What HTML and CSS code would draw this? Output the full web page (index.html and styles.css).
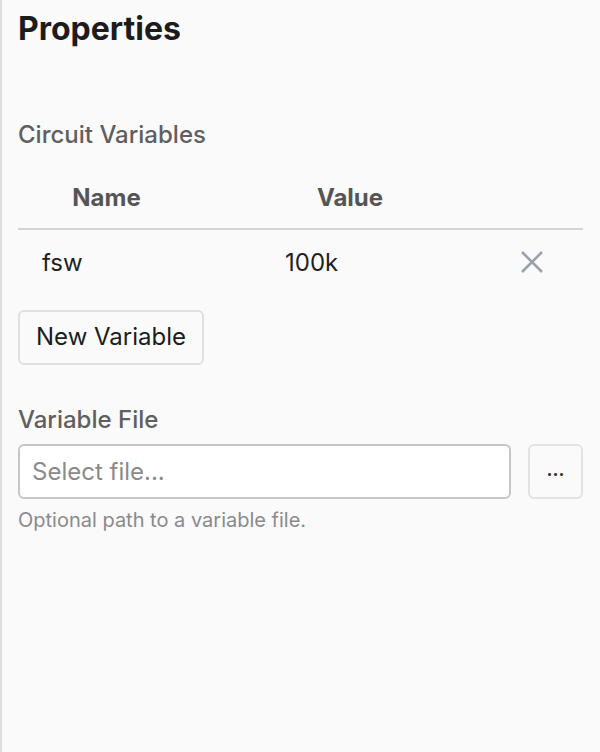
FILE: index.html
```html
<!DOCTYPE html>
<html>
<head>
<meta charset="utf-8">
<link rel="stylesheet" href="styles.css">
</head>
<body>
<div class="panel">
  <h1 class="title">Properties</h1>
  <section class="section">
    <h2 class="section-title">Circuit Variables</h2>
    <div class="vars">
      <div class="vars-head">
        <div class="th th-name">Name</div>
        <div class="th th-value">Value</div>
        <div class="th th-act"></div>
      </div>
      <div class="vars-row">
        <div class="td td-name">fsw</div>
        <div class="td td-value">100k</div>
        <div class="td td-act">
          <svg class="x-icon" viewBox="0 0 24 24" width="24" height="24"><path d="M2 2 L22 22 M22 2 L2 22" stroke="#9ba1ab" stroke-width="2.6" fill="none"/></svg>
        </div>
      </div>
    </div>
    <button class="btn">New Variable</button>
  </section>
  <section class="section file">
    <label class="field-label">Variable File</label>
    <div class="file-row">
      <div class="file-input">Select file...</div>
      <button class="btn-dots">...</button>
    </div>
    <div class="help">Optional path to a variable file.</div>
  </section>
</div>
</body>
</html>
```
FILE: styles.css
```css
html, body {
  margin: 0;
  padding: 0;
  height: 100%;
}
body {
  background: #fafafa;
  font-family: Inter, "Noto Sans", sans-serif;
  color: #1f1f1f;
}
.panel {
  box-sizing: border-box;
  min-height: 752px;
  border-left: 2px solid #dedede;
  padding: 9px 17px 0 16px;
}
.title {
  margin: 0;
  font-size: 32px;
  line-height: 40px;
  font-weight: 700;
  color: #1c1c1c;
}
.section-title {
  margin: 71px 0 0 0;
  font-size: 24px;
  line-height: 30px;
  font-weight: 500;
  color: #5f5f5f;
}
.vars {
  margin-top: 16px;
}
.vars-head, .vars-row {
  display: grid;
  grid-template-columns: 177px 310px 1fr;
  align-items: center;
}
.vars-head {
  height: 62px;
  border-bottom: 2px solid #d4d4d4;
}
.th {
  text-align: center;
  font-size: 24px;
  font-weight: 700;
  color: #555;
}
.vars-row {
  height: 64px;
}
.td {
  font-size: 24px;
  color: #1f1f1f;
}
.td-name { padding-left: 24px; }
.td-value { padding-left: 90px; }
.td-act {
  display: flex;
  align-items: center;
  padding-left: 15px;
}
.x-icon { display: block; }
.btn {
  margin-top: 16px;
  box-sizing: border-box;
  height: 55px;
  padding: 0 16px 2px 16px;
  font-family: inherit;
  font-size: 24px;
  color: #1c1c1c;
  background: #fafafa;
  border: 2px solid #e0e0e0;
  border-radius: 6px;
}
.file {
  margin-top: 40px;
}
.field-label {
  display: block;
  font-size: 24px;
  line-height: 30px;
  font-weight: 500;
  color: #5f5f5f;
}
.file-row {
  display: flex;
  gap: 17px;
  margin-top: 9px;
}
.file-input {
  box-sizing: border-box;
  flex: 1;
  height: 55px;
  display: flex;
  align-items: center;
  padding-left: 12px;
  background: #fff;
  border: 2px solid #c6c6c6;
  border-radius: 6px;
  font-size: 24px;
  color: #8a8a8a;
}
.btn-dots {
  box-sizing: border-box;
  width: 55px;
  height: 55px;
  background: #fafafa;
  border: 2px solid #e3e3e3;
  border-radius: 6px;
  font-family: inherit;
  font-size: 18px;
  font-weight: 700;
  color: #333;
  padding: 0 0 4px 0;
}
.help {
  margin-top: 9px;
  font-size: 20px;
  line-height: 24px;
  color: #8a8a8a;
}
```
